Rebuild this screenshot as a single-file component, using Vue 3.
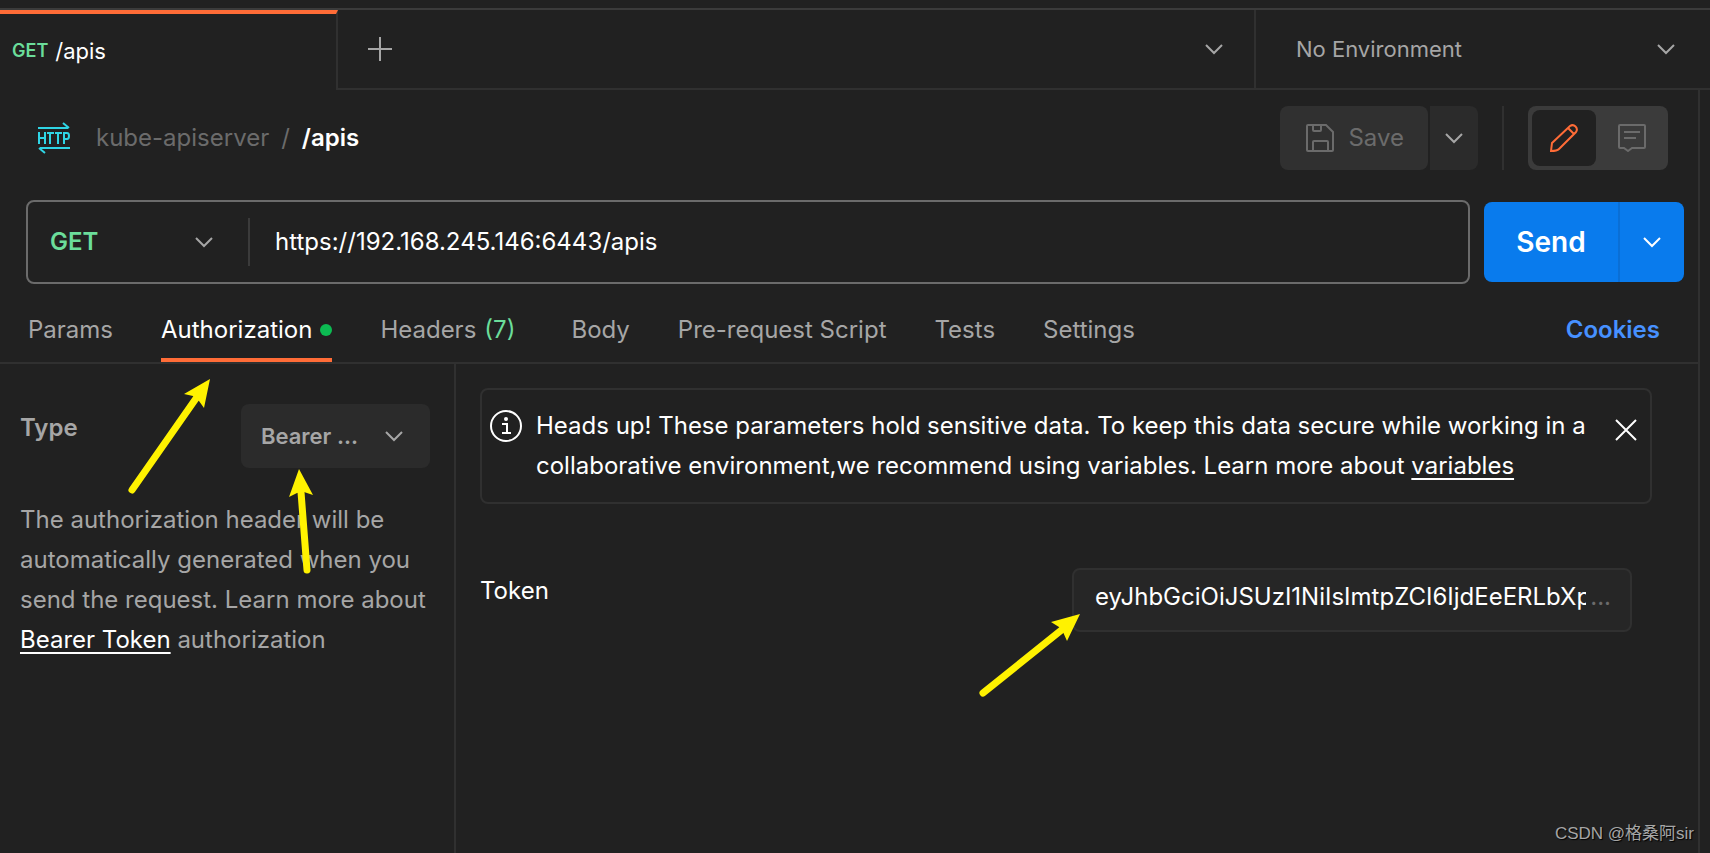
<script setup>
import { ref } from 'vue'

const method = ref('GET')
const url = ref('https://192.168.245.146:6443/apis')
const token = ref('eyJhbGciOiJSUzI1NiIsImtpZCI6IjdEeERLbXp')
const authType = ref('bearer')
const environment = ref('none')
const active = ref('Authorization')

const sections = [
  { name: 'Params' },
  { name: 'Authorization', dot: true },
  { name: 'Headers', count: 7 },
  { name: 'Body' },
  { name: 'Pre-request Script' },
  { name: 'Tests' },
  { name: 'Settings' },
]
</script>

<template>
  <div class="app">
    <header class="tabbar">
      <button class="request-tab" type="button">
        <span class="tab-method">GET</span>
        <span>/apis</span>
      </button>
      <div class="tab-tools">
        <button class="icon-button" type="button" aria-label="New tab">
          <svg width="24" height="24" viewBox="0 0 24 24"><path d="M12 0v24M0 12h24" /></svg>
        </button>
        <button class="icon-button" type="button" aria-label="Tab options">
          <svg width="18" height="12" viewBox="0 0 18 12"><path d="M1 2l8 8 8-8" /></svg>
        </button>
      </div>
      <div class="environment">
        <select v-model="environment" aria-label="Environment">
          <option value="none">No Environment</option>
        </select>
        <svg class="chevron" width="18" height="12" viewBox="0 0 18 12"><path d="M1 2l8 8 8-8" /></svg>
      </div>
    </header>

    <main class="workspace">
      <div class="title-row">
        <svg class="http-icon" width="32" height="32" viewBox="0 0 32 32">
          <path d="M0 6h30M25 1l6 5M32 26H2M7 31l-6-5" />
          <path d="M1 10v12M7 10v12M1 16h6M9 11h7M12 11v11M17 11h7M20 11v11M26 22V11h3q2 0 2 3t-2 3h-3" />
        </svg>
        <nav class="breadcrumb" aria-label="Breadcrumb">
          <a href="#">kube-apiserver</a>
          <span>/</span>
          <strong>/apis</strong>
        </nav>
        <div class="save-group">
          <button class="save" type="button" disabled>
            <svg width="28" height="28" viewBox="0 0 28 28">
              <path d="M2 1h18l7 7v18q0 1-1 1H2q-1 0-1-1V2q0-1 1-1zM7 1v5q0 1 1 1h6q1 0 1-1V1M7 27V18q0-1 1-1h13q1 0 1 1v9" />
            </svg>
            <span>Save</span>
          </button>
          <button class="save-more" type="button" aria-label="More save options">
            <svg width="18" height="12" viewBox="0 0 18 12"><path d="M1 2l8 8 8-8" /></svg>
          </button>
        </div>
        <div class="mode-toggle">
          <button class="mode selected" type="button" aria-label="Edit">
            <svg width="28" height="28" viewBox="0 0 28 28">
              <path d="M1 27l1-8L20 2q3-2 5.500.5T26 8L9 25q-2 2-8 2zM18 4l6 6" />
            </svg>
          </button>
          <button class="mode" type="button" aria-label="Comments">
            <svg width="28" height="28" viewBox="0 0 28 28">
              <path d="M2 1h24q1 0 1 1v21q0 1-1 1H14l-4 3-4-3H2q-1 0-1-1V2q0-1 1-1zM6 8h16M6 14h12" />
            </svg>
          </button>
        </div>
      </div>

      <form class="url-row" @submit.prevent>
        <div class="url-box">
          <div class="method">
            <select v-model="method" aria-label="Method">
              <option>GET</option>
              <option>POST</option>
            </select>
            <svg class="chevron" width="18" height="12" viewBox="0 0 18 12"><path d="M1 2l8 8 8-8" /></svg>
          </div>
          <input v-model="url" type="text" aria-label="Request URL" />
        </div>
        <div class="send-group">
          <button class="send" type="submit">Send</button>
          <button class="send-more" type="button" aria-label="More send options">
            <svg width="18" height="12" viewBox="0 0 18 12"><path d="M1 2l8 8 8-8" /></svg>
          </button>
        </div>
      </form>

      <nav class="sections" aria-label="Request sections">
        <button
          v-for="s in sections"
          :key="s.name"
          type="button"
          class="section"
          :class="{ active: s.name === active }"
          @click="active = s.name"
        >
          <span>{{ s.name }}</span>
          <i v-if="s.dot" class="dot"></i>
          <span v-if="s.count" class="count">({{ s.count }})</span>
          <svg v-if="s.dot" class="arrow arrow-tab" width="90" height="124" viewBox="0 0 90 124">
            <path class="shaft" d="M6 116L71 23" />
            <path class="head" d="M84 5L58 20l9 2 6 5 5 7z" />
          </svg>
        </button>
        <a class="cookies" href="#">Cookies</a>
      </nav>

      <div class="auth">
        <aside class="auth-type">
          <div class="type-row">
            <label for="auth-type">Type</label>
            <div class="type-select">
              <select id="auth-type" v-model="authType">
                <option value="bearer">Bearer ...</option>
              </select>
              <svg class="chevron" width="18" height="12" viewBox="0 0 18 12"><path d="M1 2l8 8 8-8" /></svg>
              <svg class="arrow arrow-type" width="32" height="112" viewBox="0 0 32 112">
                <path class="shaft" d="M22 102L16 24" />
                <path class="head" d="M14 1L4 29l8-4 7-1 9 3z" />
              </svg>
            </div>
          </div>
          <p>
            The authorization header will be automatically generated when you send the request.
            Learn more about <a href="#">Bearer Token</a> authorization
          </p>
        </aside>

        <section class="auth-detail">
          <div class="notice" role="status">
            <svg class="info" width="32" height="32" viewBox="0 0 32 32">
              <circle cx="16" cy="16" r="15" />
              <path d="M12 14h5v9M12 23h9" />
              <circle class="fill" cx="16" cy="9" r="2" />
            </svg>
            <p>
              Heads up! These parameters hold sensitive data. To keep this data secure while working
              in a collaborative environment,we recommend using variables. Learn more about
              <a href="#">variables</a>
            </p>
            <button class="close" type="button" aria-label="Dismiss">
              <svg width="22" height="22" viewBox="0 0 22 22"><path d="M1 1l20 20M21 1L1 21" /></svg>
            </button>
          </div>
          <div class="token-row">
            <label for="token">Token</label>
            <div class="token-field">
              <input id="token" v-model="token" type="text" />
              <span class="more">...</span>
              <svg class="arrow arrow-token" width="108" height="90" viewBox="0 0 108 90">
                <path class="shaft" d="M6 83L87 18" />
                <path class="head" d="M103 4L74 12l8 5 4 5 4 9z" />
              </svg>
            </div>
          </div>
        </section>
      </div>
    </main>
    <div class="watermark">CSDN @格桑阿sir</div>
  </div>
</template>

<style>
body {
  background: #212121;
}
</style>

<style scoped>
.app,
.app * {
  box-sizing: border-box;
}
.app {
  position: relative;
  display: flex;
  flex-direction: column;
  min-height: 100vh;
  padding-top: 8px;
  background: #212121;
  color: #fff;
  font: 24px/40px Inter, "Noto Sans CJK SC", sans-serif;
}
button,
select,
input {
  margin: 0;
  padding: 0;
  border: 0;
  background: none;
  color: inherit;
  font: inherit;
  appearance: none;
  outline: none;
}
svg {
  display: block;
  flex: none;
  fill: none;
  stroke: currentColor;
  stroke-width: 2;
}
.chevron {
  position: absolute;
  top: 50%;
  right: 35px;
  margin-top: -6px;
  pointer-events: none;
}

.tabbar {
  display: flex;
  height: 82px;
  border-top: 2px solid #3b3b3b;
  color: #a6a6a6;
  font-size: 22px;
}
.request-tab {
  display: flex;
  align-items: center;
  gap: 7px;
  width: 338px;
  padding: 0 12px 2px;
  border-top: 4px solid #ff6c37;
  border-right: 2px solid #303030;
  color: #fff;
}
.tab-method {
  color: #6bdd9a;
  font-size: 18px;
  font-weight: 600;
}
.tab-tools {
  display: flex;
  flex: 1;
  align-items: center;
  justify-content: space-between;
  padding: 0 31px 0 30px;
  border-bottom: 2px solid #303030;
}
.icon-button {
  color: #a6a6a6;
}
.environment {
  position: relative;
  width: 456px;
  border-bottom: 2px solid #303030;
  border-left: 2px solid #303030;
}
.environment select {
  width: 100%;
  height: 100%;
  padding-left: 40px;
}

.workspace {
  display: flex;
  flex: 1;
  flex-direction: column;
  margin-right: 10px;
  border-right: 2px solid #303030;
}
.title-row {
  display: flex;
  align-items: center;
  padding: 16px 30px 0 38px;
}
.http-icon {
  color: #2fd5e5;
}
.breadcrumb {
  display: flex;
  flex: 1;
  gap: 12px;
  margin-left: 26px;
  color: #6b6b6b;
}
.breadcrumb a {
  color: inherit;
  text-decoration: none;
}
.breadcrumb strong {
  color: #fff;
  font-weight: 600;
}
.save-group {
  display: flex;
  gap: 2px;
  padding-right: 24px;
  border-right: 2px solid #303030;
}
.save {
  display: flex;
  align-items: center;
  gap: 14px;
  height: 64px;
  padding: 0 24px 0 26px;
  border-radius: 8px;
  background: #303030;
  color: #6b6b6b;
}
.save-more {
  display: flex;
  align-items: center;
  justify-content: center;
  width: 48px;
  border-radius: 0 8px 8px 0;
  background: #2b2b2b;
  color: #a6a6a6;
}
.mode-toggle {
  display: flex;
  gap: 4px;
  width: 140px;
  height: 64px;
  margin-left: 24px;
  padding: 4px;
  border-radius: 8px;
  background: #3b3b3b;
}
.mode {
  display: flex;
  align-items: center;
  justify-content: center;
  width: 64px;
  border-radius: 8px;
  color: #6b6b6b;
}
.mode.selected {
  background: #212121;
  color: #ff6c37;
}

.url-row {
  display: flex;
  align-items: center;
  gap: 14px;
  margin-top: 30px;
  padding: 0 14px 0 26px;
}
.url-box {
  display: flex;
  flex: 1;
  align-items: center;
  height: 84px;
  border: 2px solid #6b6b6b;
  border-radius: 8px;
}
.method {
  position: relative;
  width: 222px;
  height: 48px;
  border-right: 2px solid #3b3b3b;
  color: #a6a6a6;
}
.method select {
  width: 100%;
  height: 100%;
  padding-left: 22px;
  color: #6bdd9a;
  font-weight: 600;
}
.url-box input {
  flex: 1;
  min-width: 0;
  padding: 0 25px;
}
.send-group {
  display: flex;
  height: 80px;
  border-radius: 8px;
  background: #097bed;
  overflow: hidden;
}
.send {
  width: 134px;
  font-size: 28px;
  font-weight: 600;
}
.send-more {
  display: flex;
  align-items: center;
  justify-content: center;
  width: 66px;
  border-left: 2px solid #0a6fd6;
}

.sections {
  display: flex;
  gap: 48px;
  margin-top: 16px;
  padding: 0 38px 0 28px;
  border-bottom: 2px solid #303030;
  color: #a6a6a6;
}
.section {
  position: relative;
  display: flex;
  align-items: center;
  gap: 8px;
  height: 62px;
  padding-top: 2px;
  border-bottom: 4px solid transparent;
  white-space: nowrap;
}
.section.active {
  border-color: #ff6c37;
  color: #fff;
}
.dot {
  width: 12px;
  height: 12px;
  border-radius: 50%;
  background: #0cbb52;
}
.count {
  margin-right: 8px;
  color: #6bdd9a;
}
.cookies {
  margin-left: auto;
  padding-top: 10px;
  color: #4791ff;
  font-weight: 600;
  text-decoration: none;
}

.auth {
  display: flex;
  flex: 1;
}
.auth-type {
  width: 456px;
  padding: 40px 24px 0 20px;
  border-right: 2px solid #303030;
  color: #a6a6a6;
}
.type-row {
  display: flex;
  justify-content: space-between;
  font-weight: 600;
}
.type-row label {
  padding-top: 4px;
}
.type-select {
  position: relative;
  width: 189px;
  height: 64px;
  border-radius: 8px;
  background: #2b2b2b;
  font-size: 22px;
}
.type-select select {
  width: 100%;
  height: 100%;
  padding-left: 20px;
}
.type-select .chevron {
  right: 27px;
}
p {
  margin: 0;
}
.auth-type p {
  margin-top: 32px;
}
p a {
  color: #fff;
  text-decoration: underline 2px;
  text-decoration-skip-ink: none;
  text-underline-offset: 4px;
}
.auth-detail {
  flex: 1;
  padding: 24px 46px 0 24px;
}
.notice {
  display: flex;
  align-items: flex-start;
  height: 116px;
  padding: 16px 13px 0 8px;
  border: 2px solid #303030;
  border-radius: 8px;
}
.info {
  margin: 4px 14px 0 0;
}
.fill {
  fill: currentColor;
  stroke: none;
}
.notice p {
  flex: 1;
}
.close {
  margin-top: 13px;
}
.token-row {
  display: flex;
  align-items: flex-start;
  justify-content: space-between;
  margin-top: 64px;
  padding-right: 20px;
}
.token-row label {
  padding-top: 3px;
}
.token-field {
  position: relative;
  display: flex;
  width: 560px;
  height: 64px;
  padding: 7px 19px 13px 21px;
  border: 2px solid #303030;
  border-radius: 8px;
  background: #262626;
}
.token-field input {
  flex: 1;
  min-width: 0;
}
.more {
  padding-left: 4px;
  color: #6b6b6b;
}

.arrow {
  position: absolute;
  pointer-events: none;
  color: #fff200;
}
.shaft {
  stroke-width: 7;
  stroke-linecap: round;
}
.head {
  fill: currentColor;
  stroke: none;
}
.arrow-tab {
  top: 74px;
  left: -35px;
}
.arrow-type {
  top: 64px;
  left: 44px;
}
.arrow-token {
  top: 40px;
  left: -97px;
}
.watermark {
  position: absolute;
  right: 16px;
  bottom: 6px;
  color: #a6a6a6;
  font: 17px/26px "Liberation Sans", "Noto Sans CJK SC", sans-serif;
  text-shadow: 1px 1px 1px #000;
}
</style>
